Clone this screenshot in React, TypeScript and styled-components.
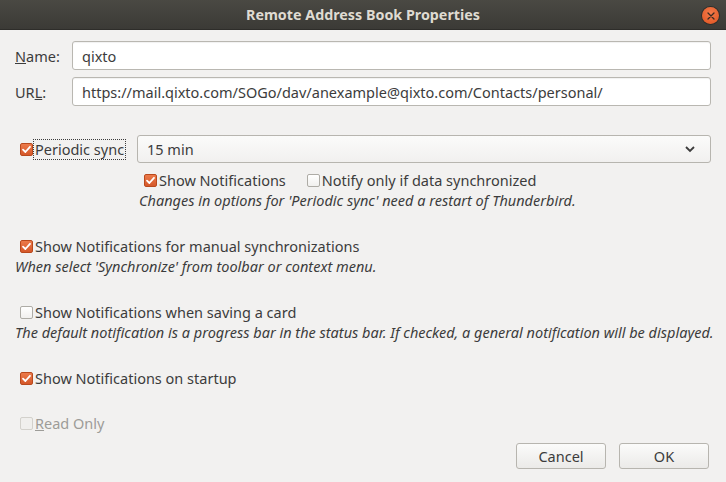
import styled, { createGlobalStyle } from 'styled-components';
import { useState } from 'react';

const GlobalStyle = createGlobalStyle`
  html, body {
    margin: 0;
    padding: 0;
    background: #f2f1f0;
  }
  body {
    font-family: 'Noto Sans', 'DejaVu Sans', sans-serif;
    font-size: 14.5px;
    color: #3c3c3c;
  }
`;

const intervals = ['5 min', '15 min', '30 min', '1 hour', '2 hours'];

function Check({ checked, disabled }: { checked: boolean; disabled?: boolean }) {
  return (
    <Box checked={checked} disabled={disabled}>
      {checked && (
        <svg width="11" height="11" viewBox="0 0 11 11">
          <path d="M2 5.6 L4.4 8 L9 2.8" fill="none" stroke="#fff" strokeWidth="1.8" strokeLinecap="round" strokeLinejoin="round" />
        </svg>
      )}
    </Box>
  );
}

export default function App() {
  const [name, setName] = useState('qixto');
  const [url, setUrl] = useState('https://mail.qixto.com/SOGo/dav/anexample@qixto.com/Contacts/personal/');
  const [opts, setOpts] = useState({
    periodic: true,
    showSync: true,
    onlyData: false,
    manual: true,
    saving: false,
    startup: true,
  });

  const toggle = (key: keyof typeof opts) => setOpts((o) => ({ ...o, [key]: !o[key] }));

  return (
    <Window>
      <GlobalStyle />
      <TitleBar>
        Remote Address Book Properties
        <CloseButton>
          <svg width="8" height="8" viewBox="0 0 8 8">
            <path d="M1 1 L7 7 M7 1 L1 7" stroke="#3a2a22" strokeWidth="1.3" strokeLinecap="round" />
          </svg>
        </CloseButton>
      </TitleBar>

      <Content>
        <FieldRow>
          <FieldLabel><u>N</u>ame:</FieldLabel>
          <TextInput value={name} onChange={(e) => setName(e.target.value)} />
        </FieldRow>
        <FieldRow>
          <FieldLabel>UR<u>L</u>:</FieldLabel>
          <TextInput value={url} onChange={(e) => setUrl(e.target.value)} />
        </FieldRow>

        <SyncRow>
          <CheckLabel indent={5} width={112} onClick={() => toggle('periodic')}>
            <Check checked={opts.periodic} />
            <FocusText>Periodic sync</FocusText>
          </CheckLabel>
          <Select>
            <span>{intervals[1]}</span>
            <svg width="12" height="8" viewBox="0 0 12 8">
              <path d="M2 2 L6 6 L10 2" fill="none" stroke="#3c3c3c" strokeWidth="1.8" />
            </svg>
          </Select>
        </SyncRow>

        <SubBlock>
          <SubChecks>
            <CheckLabel onClick={() => toggle('showSync')}>
              <Check checked={opts.showSync} />
              <span>Show Notifications</span>
            </CheckLabel>
            <CheckLabel onClick={() => toggle('onlyData')}>
              <Check checked={opts.onlyData} />
              <span>Notify only if data synchronized</span>
            </CheckLabel>
          </SubChecks>
          <Note>Changes in options for 'Periodic sync' need a restart of Thunderbird.</Note>
        </SubBlock>

        <Section>
          <CheckLabel indent={5} onClick={() => toggle('manual')}>
            <Check checked={opts.manual} />
            <span>Show Notifications for manual synchronizations</span>
          </CheckLabel>
          <Note>When select 'Synchronize' from toolbar or context menu.</Note>
        </Section>

        <Section>
          <CheckLabel indent={5} onClick={() => toggle('saving')}>
            <Check checked={opts.saving} />
            <span>Show Notifications when saving a card</span>
          </CheckLabel>
          <Note>The default notification is a progress bar in the status bar. If checked, a general notification will be displayed.</Note>
        </Section>

        <Section>
          <CheckLabel indent={5} onClick={() => toggle('startup')}>
            <Check checked={opts.startup} />
            <span>Show Notifications on startup</span>
          </CheckLabel>
        </Section>

        <Section gap={25}>
          <CheckLabel indent={5} disabled>
            <Check checked={false} disabled />
            <span><u>R</u>ead Only</span>
          </CheckLabel>
        </Section>

        <ButtonBar>
          <Button>Cancel</Button>
          <Button>OK</Button>
        </ButtonBar>
      </Content>
    </Window>
  );
}

const Window = styled.div`
  width: 726px;
  height: 482px;
  display: flex;
  flex-direction: column;
  background: #f2f1f0;
  overflow: hidden;
`;

const TitleBar = styled.div`
  position: relative;
  height: 30px;
  flex-shrink: 0;
  display: flex;
  align-items: center;
  justify-content: center;
  background: linear-gradient(#4a4943, #3b3a36);
  color: #dfdbd2;
  font-weight: 700;
  font-size: 14.3px;
  border-bottom: 1px solid #2e2d2a;
  box-sizing: border-box;
`;

const CloseButton = styled.div`
  position: absolute;
  right: 7px;
  top: 7px;
  width: 17px;
  height: 17px;
  border-radius: 50%;
  background: radial-gradient(circle at 50% 35%, #f47a4a, #df5320);
  box-shadow: 0 0 0 1px #2f2e2b;
  display: flex;
  align-items: center;
  justify-content: center;
`;

const Content = styled.div`
  flex: 1;
  display: flex;
  flex-direction: column;
  padding: 11px 15px 0 15px;
`;

const FieldRow = styled.div`
  display: flex;
  align-items: center;
  height: 29px;
  margin-bottom: 7px;
`;

const FieldLabel = styled.label`
  width: 57px;
  flex-shrink: 0;
`;

const TextInput = styled.input`
  flex: 1;
  height: 29px;
  box-sizing: border-box;
  border: 1px solid #b9b7b1;
  border-radius: 3px;
  background: #ffffff;
  box-shadow: inset 0 1px 1px rgba(0, 0, 0, 0.06);
  padding: 0 9px;
  font: inherit;
  color: #3c3c3c;
  outline: none;
`;

const SyncRow = styled.div`
  display: flex;
  align-items: center;
  height: 28px;
  margin-top: 22px;
  gap: 5px;
`;

const CheckLabel = styled.label<{ indent?: number; width?: number; disabled?: boolean }>`
  display: flex;
  align-items: center;
  gap: 2px;
  height: 20px;
  flex-shrink: 0;
  width: ${({ width }) => (width ? `${width}px` : 'auto')};
  margin-left: ${({ indent }) => indent ?? 0}px;
  color: ${({ disabled }) => (disabled ? '#9d9c98' : '#3c3c3c')};
  white-space: nowrap;
  cursor: default;
`;

const Box = styled.span<{ checked: boolean; disabled?: boolean }>`
  width: 13px;
  height: 13px;
  box-sizing: border-box;
  border-radius: 2px;
  flex-shrink: 0;
  display: flex;
  align-items: center;
  justify-content: center;
  border: 1px solid ${({ checked, disabled }) => (checked ? '#b9491d' : disabled ? '#d3d1cc' : '#aeaca6')};
  background: ${({ checked, disabled }) =>
    checked ? 'linear-gradient(#ec7a4a, #d5582a)' : disabled ? '#f0efed' : 'linear-gradient(#ffffff, #f1f0ee)'};
`;

const FocusText = styled.span`
  outline: 1px dotted #3c3c3c;
  outline-offset: 1px;
  line-height: 17px;
`;

const Select = styled.div`
  flex: 1;
  height: 28px;
  box-sizing: border-box;
  display: flex;
  align-items: center;
  justify-content: space-between;
  padding: 0 14px 0 9px;
  border: 1px solid #b7b5af;
  border-radius: 3px;
  background: linear-gradient(#fbfbfa, #f1f0ef);
`;

const SubBlock = styled.div`
  display: flex;
  flex-direction: column;
  margin-top: 7px;
  margin-left: 124px;
`;

const SubChecks = styled.div`
  display: flex;
  gap: 21px;
  margin-left: 5px;
`;

const Note = styled.div`
  font-style: italic;
  height: 21px;
  line-height: 21px;
  white-space: nowrap;
`;

const Section = styled.div<{ gap?: number }>`
  display: flex;
  flex-direction: column;
  margin-top: ${({ gap }) => gap ?? 25}px;
`;

const ButtonBar = styled.div`
  display: flex;
  justify-content: flex-end;
  gap: 13px;
  margin-top: 10px;
  padding-right: 2px;
`;

const Button = styled.button`
  width: 90px;
  height: 26px;
  border: 1px solid #b7b5af;
  border-radius: 3px;
  background: linear-gradient(#fbfbfa, #ebeae8);
  font: inherit;
  color: #3c3c3c;
`;
